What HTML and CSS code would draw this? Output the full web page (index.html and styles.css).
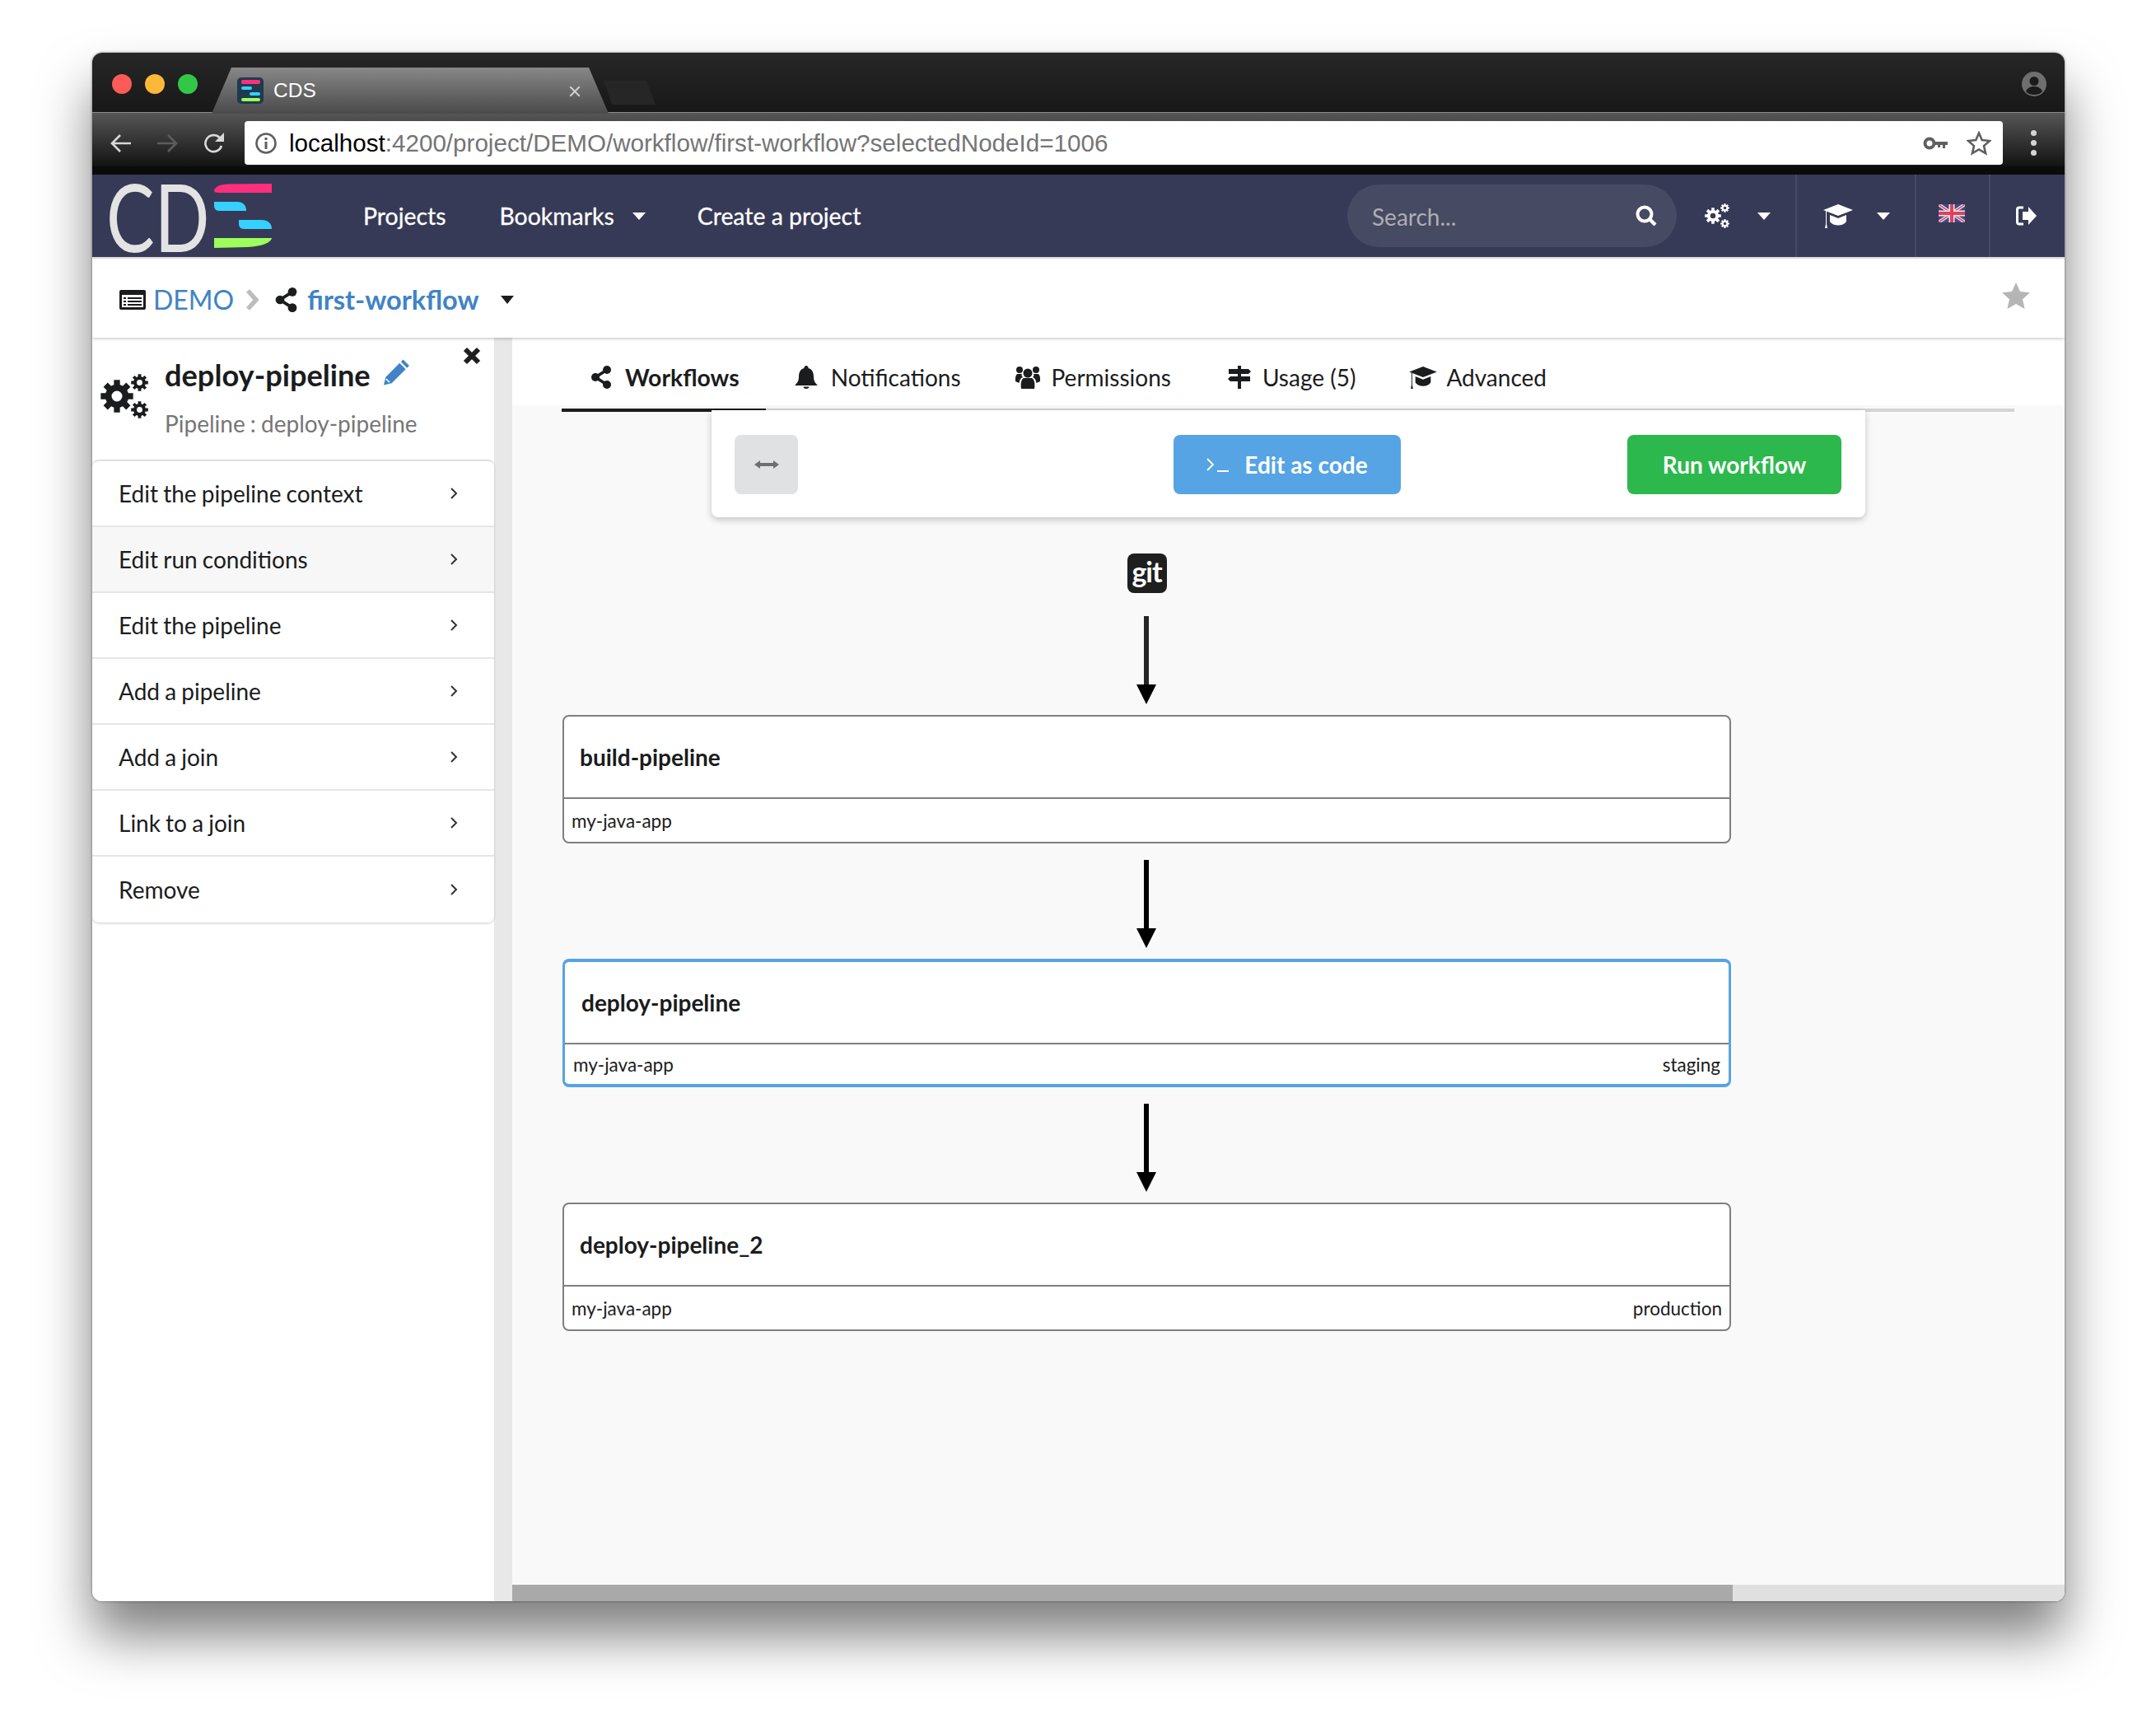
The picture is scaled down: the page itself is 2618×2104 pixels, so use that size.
FILE: index.html
```html
<!DOCTYPE html>
<html lang="en">
<head>
    <meta charset="UTF-8">
    <title>CDS</title>
    <link rel="stylesheet" href="styles.css">
</head>
<body>
    <svg class="defs" width="0" height="0">
        <symbol id="share" viewBox="0 0 24 28">
            <path d="M19 5 5 14l14 9" fill="none" stroke="currentColor" stroke-width="3.6"/>
            <circle cx="19" cy="5" r="5"/><circle cx="5" cy="14" r="5"/><circle cx="19" cy="23" r="5"/>
        </symbol>
        <symbol id="gear" viewBox="-12 -12 24 24">
            <circle r="6.2" fill="none" stroke="currentColor" stroke-width="4.6"/>
            <path d="M0-11.800V-7M0 7V11.800M-11.800 0H-7M7 0H11.800M-8.300-8.300-5-5M5 5 8.300 8.300M-8.300 8.300-5 5M5-5 8.300-8.300" stroke="currentColor" stroke-width="4.400"/>
        </symbol>
        <symbol id="cap" viewBox="0 0 36 30">
            <path d="M18 1 36 8 18 15 0 8z"/>
            <path d="M8 14v8c2 3 6 4.500 10 4.500s8-1.500 10-4.500v-8l-10 4z"/>
            <path d="M3 9v16l-1 5h3l-1-5V9z"/>
        </symbol>
    </svg>

    <div class="window">
        <div class="tabstrip">
            <div class="lights">
                <span class="light light-red"></span>
                <span class="light light-yellow"></span>
                <span class="light light-green"></span>
            </div>
            <div class="tab">
                <svg class="favicon" viewBox="0 0 32 32">
                    <rect width="32" height="32" rx="5" fill="#1f3a4d"/>
                    <rect x="5" y="3" width="23" height="5" rx="2" fill="#ff2f7e"/>
                    <rect x="5" y="11" width="13" height="4" rx="2" fill="#35d0ff"/>
                    <rect x="15" y="18" width="13" height="4" rx="2" fill="#35d0ff"/>
                    <rect x="5" y="25" width="23" height="4" rx="2" fill="#9cff5c"/>
                </svg>
                <span class="tab-title">CDS</span>
                <svg class="tab-close" viewBox="0 0 14 14"><path d="M2 2l10 10M12 2 2 12" stroke="#cfcfcf" stroke-width="1.800"/></svg>
            </div>
            <div class="newtab"></div>
            <svg class="profile" viewBox="0 0 30 30">
                <circle cx="15" cy="15" r="15" fill="#6f6f6f"/>
                <circle cx="15" cy="11.500" r="5.500" fill="#1b1b1b"/>
                <path d="M5 24c2-5 6-6 10-6s8 1 10 6c-3 3-6 4-10 4s-7-1-10-4z" fill="#1b1b1b"/>
            </svg>
        </div>

        <div class="toolbar">
            <svg class="tool-icon tool-back" viewBox="0 0 28 28"><path d="M26 14H3M13 4 3 14l10 10" fill="none" stroke="#d8d8d8" stroke-width="2.600"/></svg>
            <svg class="tool-icon tool-forward" viewBox="0 0 28 28"><path d="M2 14h23M15 4l10 10-10 10" fill="none" stroke="#5c5c5c" stroke-width="2.600"/></svg>
            <svg class="tool-icon tool-reload" viewBox="0 0 28 28"><path d="M23 17a10 10 0 1 1-2.500-10" fill="none" stroke="#d8d8d8" stroke-width="2.600"/><path d="M26 1v11H15z" fill="#d8d8d8"/></svg>
            <div class="urlbar">
                <svg class="url-info" viewBox="0 0 28 28"><circle cx="14" cy="14" r="11.500" fill="none" stroke="#5f5f5f" stroke-width="2.600"/><path d="M12.500 12h3v9h-3zM12.500 7h3v3h-3z" fill="#5f5f5f"/></svg>
                <span class="url-host">localhost</span><span class="url-path">:4200/project/DEMO/workflow/first-workflow?selectedNodeId=1006</span>
                <svg class="url-key" viewBox="0 0 30 16"><circle cx="8" cy="8" r="5.500" fill="none" stroke="#5f5f5f" stroke-width="4"/><path d="M13 6h17v4h-3v4h-3v-4h-3v3h-3v-3h-5z" fill="#5f5f5f"/></svg>
                <svg class="url-star" viewBox="0 0 30 30"><path d="M15 2.500l3.700 8.600 9.300.9-7 6.100 2.100 9.100-8.100-4.800-8.100 4.800 2.100-9.100-7-6.100 9.300-.9z" fill="none" stroke="#5f5f5f" stroke-width="2.600"/></svg>
            </div>
            <div class="tool-dots"><i></i><i></i><i></i></div>
        </div>
        <div class="toolbar-edge"></div>

        <nav class="navbar">
            <div class="logo">
                <span class="logo-text">CD</span>
                <svg class="logo-bars" viewBox="0 0 70 78">
                    <path d="M0 8C2 3 8 1 16 0.500L70 0v11H5C2 11 0 10 0 8z" fill="#ff2f7e"/>
                    <path d="M0 22h28c7 0 11 4 11 11H6c-4 0-6-3-6-6z" fill="#35d0ff"/>
                    <path d="M30 44h28c7 0 12 4 12 11H36c-4 0-6-3-6-6z" fill="#35d0ff"/>
                    <path d="M0 66h70c-1 5-10 10-30 11L0 78z" fill="#9cff5c"/>
                </svg>
            </div>
            <a class="nav-link nav-projects">Projects</a>
            <a class="nav-link nav-bookmarks">Bookmarks</a>
            <i class="caret caret-light caret-bookmarks"></i>
            <a class="nav-link nav-create">Create a project</a>
            <div class="nav-right">
                <div class="search">
                    <span class="search-text">Search...</span>
                    <svg class="search-icon" viewBox="0 0 26 26"><circle cx="11" cy="11" r="8.500" fill="none" stroke="#fff" stroke-width="4"/><path d="M17 17l7 7" stroke="#fff" stroke-width="4.400"/></svg>
                </div>
                <div class="nav-cell nav-cell-settings">
                    <svg class="nav-gears" viewBox="0 0 30 30">
                        <use href="#gear" x="0" y="5" width="20" height="20"/>
                        <use href="#gear" x="19" y="0" width="11" height="11"/>
                        <use href="#gear" x="19" y="19" width="11" height="11"/>
                    </svg>
                    <i class="caret caret-light"></i>
                </div>
                <div class="nav-cell nav-cell-learn">
                    <svg class="nav-cap"><use href="#cap"/></svg>
                    <i class="caret caret-light"></i>
                </div>
                <div class="nav-cell nav-cell-flag">
                    <svg class="flag" viewBox="0 0 32 22">
                        <rect width="32" height="22" fill="#3c4a86"/>
                        <path d="M0 0l32 22M32 0 0 22" stroke="#e9dfe6" stroke-width="4"/>
                        <path d="M0 0l32 22M32 0 0 22" stroke="#d9506a" stroke-width="1.500"/>
                        <path d="M16 0v22M0 11h32" stroke="#f0e6ea" stroke-width="7"/>
                        <path d="M16 0v22M0 11h32" stroke="#e0405c" stroke-width="4"/>
                    </svg>
                </div>
                <div class="nav-cell nav-cell-exit">
                    <svg class="nav-exit" viewBox="0 0 25 24">
                        <path d="M9 2H4C2.500 2 1.500 3 1.500 4.500v15C1.500 21 2.500 22 4 22h5" fill="none" stroke="#fff" stroke-width="3"/>
                        <path d="M8 7h7V1l10 11-10 11v-6H8z" fill="#fff"/>
                    </svg>
                </div>
            </div>
        </nav>

        <div class="breadcrumb">
            <svg class="crumb-list" viewBox="0 0 32 24">
                <rect width="32" height="24" rx="2" fill="#1b1c1d"/>
                <rect x="3" y="6" width="26" height="15" fill="#fff"/>
                <path d="M5 9h3v2H5zM10 9h17v2H10zM5 13h3v2H5zM10 13h17v2H10zM5 17h3v2H5zM10 17h17v2H10z" fill="#1b1c1d"/>
            </svg>
            <a class="crumb-project">DEMO</a>
            <svg class="crumb-chevron" viewBox="0 0 16 26"><path d="M3 2l10 11L3 24" fill="none" stroke="#bdbdbd" stroke-width="5.500"/></svg>
            <svg class="crumb-share"><use href="#share"/></svg>
            <a class="crumb-workflow">first-workflow</a>
            <i class="caret caret-dark"></i>
            <svg class="crumb-star" viewBox="0 0 34 32"><path d="M17 0l5 11 12 1.200-9 8 2.600 11.800L17 26l-10.600 6L9 20.200l-9-8L12 11z" fill="#b5b5b5"/></svg>
        </div>

        <div class="main">
            <aside class="sidebar">
                <div class="side-head">
                    <svg class="side-gears" viewBox="0 0 58 54">
                        <use href="#gear" x="0" y="7" width="40" height="40"/>
                        <use href="#gear" x="37" y="0" width="21" height="21"/>
                        <use href="#gear" x="37" y="33" width="21" height="21"/>
                    </svg>
                    <div class="side-title">
                        <div class="side-name">
                            <span>deploy-pipeline</span>
                            <svg class="side-pencil" viewBox="0 0 31 31">
                                <path d="M23 1.500l7 7-2.500 2.500-7-7zM19 5.500l7 7L10 28.500l-9 2 2-9z" fill="#4183c4"/>
                                <path d="M3.500 23.500l4 4" stroke="#fff" stroke-width="1.500"/>
                            </svg>
                        </div>
                        <div class="side-sub">Pipeline : deploy-pipeline</div>
                    </div>
                    <svg class="side-close" viewBox="0 0 22 22"><path d="M3 3l16 16M19 3 3 19" stroke="#1f1f1f" stroke-width="6"/></svg>
                </div>
                <div class="menu">
                    <a class="menu-item">Edit the pipeline context<svg class="menu-arrow" viewBox="0 0 10 16"><path d="M2 2l6 6-6 6" fill="none" stroke="#333" stroke-width="2"/></svg></a>
                    <a class="menu-item menu-item-hover">Edit run conditions<svg class="menu-arrow" viewBox="0 0 10 16"><path d="M2 2l6 6-6 6" fill="none" stroke="#333" stroke-width="2"/></svg></a>
                    <a class="menu-item">Edit the pipeline<svg class="menu-arrow" viewBox="0 0 10 16"><path d="M2 2l6 6-6 6" fill="none" stroke="#333" stroke-width="2"/></svg></a>
                    <a class="menu-item">Add a pipeline<svg class="menu-arrow" viewBox="0 0 10 16"><path d="M2 2l6 6-6 6" fill="none" stroke="#333" stroke-width="2"/></svg></a>
                    <a class="menu-item">Add a join<svg class="menu-arrow" viewBox="0 0 10 16"><path d="M2 2l6 6-6 6" fill="none" stroke="#333" stroke-width="2"/></svg></a>
                    <a class="menu-item">Link to a join<svg class="menu-arrow" viewBox="0 0 10 16"><path d="M2 2l6 6-6 6" fill="none" stroke="#333" stroke-width="2"/></svg></a>
                    <a class="menu-item">Remove<svg class="menu-arrow" viewBox="0 0 10 16"><path d="M2 2l6 6-6 6" fill="none" stroke="#333" stroke-width="2"/></svg></a>
                </div>
            </aside>

            <section class="content">
                <div class="tabs">
                    <a class="tabs-item tabs-workflows"><svg class="tabs-icon"><use href="#share"/></svg>Workflows</a>
                    <a class="tabs-item tabs-notifications">
                        <svg class="tabs-icon" viewBox="0 0 28 28"><path d="M14 0a2.500 2.500 0 0 1 2.500 3C21 4 23 8 23 13c0 6 2 8 5 11H0c3-3 5-5 5-11 0-5 2-9 6.500-10A2.500 2.500 0 0 1 14 0zM10.500 25.500h7a3.500 2.500 0 0 1-7 0z"/></svg>Notifications</a>
                    <a class="tabs-item tabs-permissions">
                        <svg class="tabs-icon" viewBox="0 0 30 28"><circle cx="15" cy="9" r="5.500"/><circle cx="5" cy="5" r="4"/><circle cx="25" cy="5" r="4"/><path d="M7 28c-1-5 0-12 3-13h10c3 1 4 8 3 13z"/><path d="M0 19c-.500-6 1-9 3-9h5c-1 2 0 3 1 4-3 1-4 4-4.500 7zM30 19c.5-6-1-9-3-9h-5c1 2 0 3-1 4 3 1 4 4 4.500 7z"/></svg>Permissions</a>
                    <a class="tabs-item tabs-usage">
                        <svg class="tabs-icon" viewBox="0 0 28 28"><path d="M12 0h4v4h9l3 3-3 3h-9v3h11v6H16v9h-4v-9H3l-3-3 3-3h9v-3H1V4h11z"/></svg>Usage (5)</a>
                    <a class="tabs-item tabs-advanced"><svg class="tabs-icon tabs-cap"><use href="#cap"/></svg>Advanced</a>
                </div>
                <div class="tabs-line"><div class="tabs-line-active"></div></div>

                <div class="actions">
                    <button class="btn btn-resize">
                        <svg class="resize-icon" viewBox="0 0 30 12"><path d="M0 6l7-5v3h16V1l7 5-7 5V8H7v3z" fill="#6f6f6f"/></svg>
                    </button>
                    <button class="btn btn-code">
                        <svg class="code-icon" viewBox="0 0 28 20"><path d="M1 3l7 7-7 7M13 18h14" fill="none" stroke="#fff" stroke-width="1.800"/></svg>Edit as code</button>
                    <button class="btn btn-run">Run workflow</button>
                </div>

                <div class="graph">
                    <div class="git-hook">git</div>
                    <div class="edge edge-first"><div class="edge-line"></div><div class="edge-head"></div></div>
                    <div class="node">
                        <div class="node-name">build-pipeline</div>
                        <div class="node-foot"><span>my-java-app</span></div>
                    </div>
                    <div class="edge"><div class="edge-line"></div><div class="edge-head"></div></div>
                    <div class="node node-active">
                        <div class="node-name">deploy-pipeline</div>
                        <div class="node-foot"><span>my-java-app</span><span>staging</span></div>
                    </div>
                    <div class="edge"><div class="edge-line"></div><div class="edge-head"></div></div>
                    <div class="node">
                        <div class="node-name">deploy-pipeline_2</div>
                        <div class="node-foot"><span>my-java-app</span><span>production</span></div>
                    </div>
                </div>

                <div class="hscroll"><div class="hscroll-thumb"></div></div>
            </section>
        </div>
    </div>
</body>
</html>
```

FILE: styles.css
```css
html, body {
    margin: 0;
    height: 2104px;
    overflow: hidden;
    background: #fff;
}
body {
    font-family: 'Lato', sans-serif;
    font-size: 28px;
    color: #1b1c1d;
    padding: 64px 0 0 112px;
    box-sizing: border-box;
}
svg {
    display: block;
    flex-shrink: 0;
    fill: currentColor;
}
.defs {
    position: absolute;
}

/* window */
.window {
    width: 2395px;
    height: 1880px;
    display: flex;
    flex-direction: column;
    background: #fff;
    border-radius: 12px;
    overflow: hidden;
    box-shadow: 0 42px 64px rgba(0, 0, 0, 0.5), 0 0 3px rgba(0, 0, 0, 0.5);
}

/* browser chrome */
.tabstrip {
    height: 72px;
    flex-shrink: 0;
    display: flex;
    background: linear-gradient(#272727, #181818);
    border-bottom: 1px solid #8a8a8a;
}
.lights {
    display: flex;
    flex-shrink: 0;
    gap: 16px;
    padding: 26px 0 0 24px;
    width: 121px;
    box-sizing: border-box;
}
.light {
    flex: none;
    width: 24px;
    height: 24px;
    border-radius: 50%;
}
.light-red { background: #fc5b57; }
.light-yellow { background: #fdb83a; }
.light-green { background: #33c748; }
.tab {
    width: 482px;
    height: 56px;
    margin: 18px 0 -1px 24px;
    padding: 12px 0 0 31px;
    box-sizing: border-box;
    display: flex;
    background: linear-gradient(#888, #4a4a4a);
    clip-path: polygon(24px 0, 458px 0, 100% 100%, 0 100%);
    position: relative;
}
.favicon {
    width: 32px;
    height: 32px;
}
.tab-title {
    font-family: 'Liberation Sans', sans-serif;
    font-size: 24.500px;
    line-height: 32px;
    color: #fff;
    margin-left: 12px;
}
.tab-close {
    width: 16px;
    height: 16px;
    margin: 9px 0 0 306px;
}
.newtab {
    width: 63px;
    height: 29px;
    margin: 34px 0 0 -6px;
    background: #262626;
    clip-path: polygon(0 0, 52px 0, 100% 100%, 10px 100%);
}
.profile {
    width: 30px;
    height: 30px;
    margin: 23px 22px 0 auto;
}
.toolbar {
    height: 65px;
    flex-shrink: 0;
    box-sizing: border-box;
    padding-top: 8px;
    display: flex;
    align-items: center;
    background: linear-gradient(#565656, #131313);
}
.tool-icon {
    width: 28px;
    height: 28px;
}
.tool-back { margin-left: 21px; }
.tool-forward { margin-left: 28px; }
.tool-reload { margin-left: 29px; }
.urlbar {
    width: 2135px;
    height: 53px;
    margin-left: 23px;
    background: #fff;
    border-radius: 4px;
    display: flex;
    align-items: center;
    font-family: 'Liberation Sans', sans-serif;
    font-size: 29.600px;
}
.url-info {
    width: 28px;
    height: 28px;
    margin: 0 14px 0 12px;
}
.url-host { color: #000; }
.url-path { color: #757575; }
.url-key {
    width: 30px;
    height: 16px;
    margin-left: auto;
}
.url-star {
    width: 30px;
    height: 30px;
    margin: 0 14px 0 23px;
}
.tool-dots {
    display: flex;
    flex-direction: column;
    gap: 5px;
    margin-left: 34px;
}
.tool-dots i {
    width: 7px;
    height: 7px;
    border-radius: 50%;
    background: #d4d4d4;
}
.toolbar-edge {
    height: 10px;
    flex-shrink: 0;
    background: #0b0b0b;
}

/* navbar */
.navbar {
    height: 100px;
    flex-shrink: 0;
    display: flex;
    align-items: center;
    background: #373a56;
    color: #fff;
    border-bottom: 2px solid #e4e4e4;
}
.logo {
    display: flex;
    align-items: center;
    width: 221px;
    margin-left: 17px;
}
.logo-text {
    font-size: 114px;
    line-height: 100px;
    color: #e3e3e3;
    width: 131px;
    transform: scaleX(0.77);
    transform-origin: left center;
}
.logo-bars {
    width: 70px;
    height: 78px;
}
.nav-link {
    font-size: 28.400px;
    -webkit-text-stroke: 0.3px #fff;
}
.nav-projects { margin-left: 91px; }
.nav-bookmarks { margin-left: 65px; }
.caret-bookmarks { margin-left: 22px; }
.nav-create { margin-left: 63px; }
.caret {
    display: block;
    width: 0;
    height: 0;
    border-left: 8px solid transparent;
    border-right: 8px solid transparent;
}
.caret-light { border-top: 9px solid #fff; }
.caret-dark { border-top: 10px solid #1b1c1d; }
.nav-right {
    margin-left: auto;
    display: flex;
    align-items: stretch;
    height: 100px;
}
.search {
    width: 400px;
    height: 76px;
    margin-top: 12px;
    padding: 0 24px 0 30px;
    box-sizing: border-box;
    border-radius: 38px;
    background: #474a63;
    display: flex;
    align-items: center;
    justify-content: space-between;
}
.search-text {
    color: #aeaeb4;
    margin-top: 2px;
}
.search-icon {
    width: 26px;
    height: 26px;
}
.nav-cell {
    display: flex;
    align-items: center;
    border-left: 2px solid #474a63;
    box-sizing: border-box;
}
.nav-cell-settings {
    border-left: 0;
    width: 144px;
    padding-left: 34px;
}
.nav-gears {
    width: 30px;
    height: 30px;
    margin-right: 34px;
}
.nav-cell-learn {
    width: 145px;
    padding-left: 32px;
}
.nav-cap {
    width: 36px;
    height: 30px;
    margin-right: 29px;
}
.nav-cell-flag {
    width: 90px;
    padding: 0 0 6px 27px;
}
.flag {
    width: 32px;
    height: 22px;
    filter: blur(0.6px);
}
.nav-cell-exit {
    width: 92px;
    padding-left: 31px;
}
.nav-exit {
    width: 25px;
    height: 24px;
}

/* breadcrumb */
.breadcrumb {
    height: 96px;
    flex-shrink: 0;
    box-sizing: border-box;
    padding-top: 3px;
    display: flex;
    align-items: center;
    background: #fff;
    position: relative;
    z-index: 2;
    box-shadow: 0 1px 4px rgba(0, 0, 0, 0.25);
    font-size: 32px;
    color: #4183c4;
}
.crumb-list {
    width: 32px;
    height: 24px;
    margin-left: 33px;
}
.crumb-project { margin-left: 9px; }
.crumb-chevron {
    width: 16px;
    height: 26px;
    margin-left: 14px;
}
.crumb-share {
    width: 27px;
    height: 30px;
    margin-left: 20px;
    color: #1b1c1d;
}
.crumb-workflow {
    margin-left: 12px;
    font-size: 32.500px;
    font-weight: 700;
}
.caret-dark { margin-left: 26px; }
.crumb-star {
    width: 34px;
    height: 32px;
    margin: -9px 42px 0 auto;
}

/* sidebar */
.main {
    flex: 1;
    min-height: 0;
    display: flex;
}
.sidebar {
    width: 510px;
    flex-shrink: 0;
    box-sizing: border-box;
    background: #fff;
    border-right: 22px solid #e8e8e8;
}
.side-head {
    height: 148px;
    box-sizing: border-box;
    padding: 22px 0 0 10px;
    display: flex;
    position: relative;
}
.side-gears {
    width: 58px;
    height: 54px;
    margin: 22px 20px 0 0;
}
.side-name {
    display: flex;
    align-items: center;
    font-size: 36.200px;
    font-weight: 700;
    line-height: 46px;
}
.side-pencil {
    width: 33px;
    height: 33px;
    margin: -8px 0 0 15px;
}
.side-sub {
    color: #767676;
    line-height: 36px;
    margin-top: 18px;
    word-spacing: -1px;
}
.side-close {
    position: absolute;
    top: 11px;
    right: 16px;
    width: 22px;
    height: 22px;
}
.menu {
    border-top: 2px solid #e0e0e0;
    border-radius: 8px;
    box-shadow: 0 1px 3px rgba(0, 0, 0, 0.2);
}
.menu-item {
    height: 80px;
    box-sizing: border-box;
    padding: 0 44px 0 32px;
    display: flex;
    align-items: center;
    justify-content: space-between;
    border-bottom: 2px solid #e6e6e6;
    word-spacing: -1px;
}
.menu-item:last-child {
    border-bottom: 0;
}
.menu-item-hover {
    background: #f7f7f7;
}
.menu-arrow {
    width: 10px;
    height: 16px;
}

/* tabs */
.content {
    flex: 1;
    min-width: 0;
    display: flex;
    flex-direction: column;
    background: #f9f9f9;
}
.tabs {
    height: 82px;
    flex-shrink: 0;
    box-sizing: border-box;
    padding: 13px 0 0 96px;
    background: #fff;
    display: flex;
    align-items: center;
}
.tabs-item {
    display: flex;
    align-items: center;
}
.tabs-icon {
    width: 28px;
    height: 28px;
    color: #1b1c1d;
}
.tabs-workflows {
    font-weight: 700;
    font-size: 28.400px;
    gap: 17px;
}
.tabs-workflows .tabs-icon { width: 24px; height: 28px; }
.tabs-notifications { margin-left: 67px; gap: 16px; }
.tabs-permissions { margin-left: 66px; gap: 14px; }
.tabs-permissions .tabs-icon { width: 30px; }
.tabs-usage { margin-left: 69px; gap: 14px; }
.tabs-advanced { margin-left: 65px; gap: 11px; }
.tabs-cap { width: 34px; height: 28px; }
.tabs-line {
    height: 4px;
    margin: 4px 61px 0 60px;
    flex-shrink: 0;
    background: #d4d4d4;
}
.tabs-line-active {
    width: 248px;
    height: 4px;
    background: #1b1c1d;
}

/* actions card */
.actions {
    width: 1401px;
    height: 130px;
    flex-shrink: 0;
    box-sizing: border-box;
    margin: -2px 0 0 242px;
    padding: 30px 29px;
    background: #fff;
    border-radius: 0 0 8px 8px;
    box-shadow: 0 3px 8px rgba(0, 0, 0, 0.22);
    display: flex;
    position: relative;
}
.btn {
    height: 72px;
    border: 0;
    border-radius: 8px;
    padding: 0;
    font-family: inherit;
    font-size: 28px;
    font-weight: 700;
    color: #fff;
    display: flex;
    align-items: center;
    justify-content: center;
}
.btn-resize {
    width: 77px;
    margin-left: -1px;
    background: #e0e1e2;
}
.resize-icon {
    width: 30px;
    height: 12px;
}
.btn-code {
    width: 276px;
    margin-left: 456px;
    background: #56a4e3;
    gap: 18px;
}
.code-icon {
    width: 28px;
    height: 20px;
}
.btn-run {
    width: 260px;
    margin-left: auto;
    background: #2db84d;
}

/* workflow graph */
.graph {
    flex: 1;
    min-height: 0;
    width: 1419px;
    margin-left: 61px;
    display: flex;
    flex-direction: column;
    align-items: center;
}
.git-hook {
    width: 48px;
    height: 48px;
    margin-top: 44px;
    border-radius: 8px;
    background: #1f1f1f;
    color: #fff;
    font-size: 34px;
    font-weight: 700;
    line-height: 44px;
    text-align: center;
    letter-spacing: -1px;
}
.edge {
    height: 107px;
    margin: 20px 1px 13px 0;
    display: flex;
    flex-direction: column;
    align-items: center;
}
.edge-first {
    margin-top: 28px;
}
.edge-line {
    width: 6px;
    height: 83px;
    background: #000;
}
.edge-first .edge-line {
    background: #262626;
}
.edge-head {
    width: 0;
    height: 0;
    border-left: 12px solid transparent;
    border-right: 12px solid transparent;
    border-top: 24px solid #000;
}
.node {
    width: 100%;
    height: 156px;
    flex-shrink: 0;
    box-sizing: border-box;
    background: #fff;
    border: 2px solid #7f7f7f;
    border-radius: 8px;
    display: flex;
    flex-direction: column;
}
.node-active {
    border: 3px solid #56a4e3;
    border-top-width: 4px;
    border-bottom-width: 4px;
}
.node-name {
    height: 100px;
    flex-shrink: 0;
    box-sizing: border-box;
    padding-left: 19px;
    display: flex;
    align-items: center;
    font-weight: 700;
    border-bottom: 2px solid #7f7f7f;
}
.node-active .node-name {
    padding-left: 20px;
}
.node-foot {
    flex: 1;
    padding: 0 9px;
    display: flex;
    align-items: center;
    justify-content: space-between;
    font-size: 22.500px;
}
.node-active .node-foot {
    padding: 0 10px;
}

.hscroll {
    height: 20px;
    flex-shrink: 0;
    background: #e0e0e0;
}
.hscroll-thumb {
    width: 1482px;
    height: 20px;
    background: #a9a9a9;
}
```
